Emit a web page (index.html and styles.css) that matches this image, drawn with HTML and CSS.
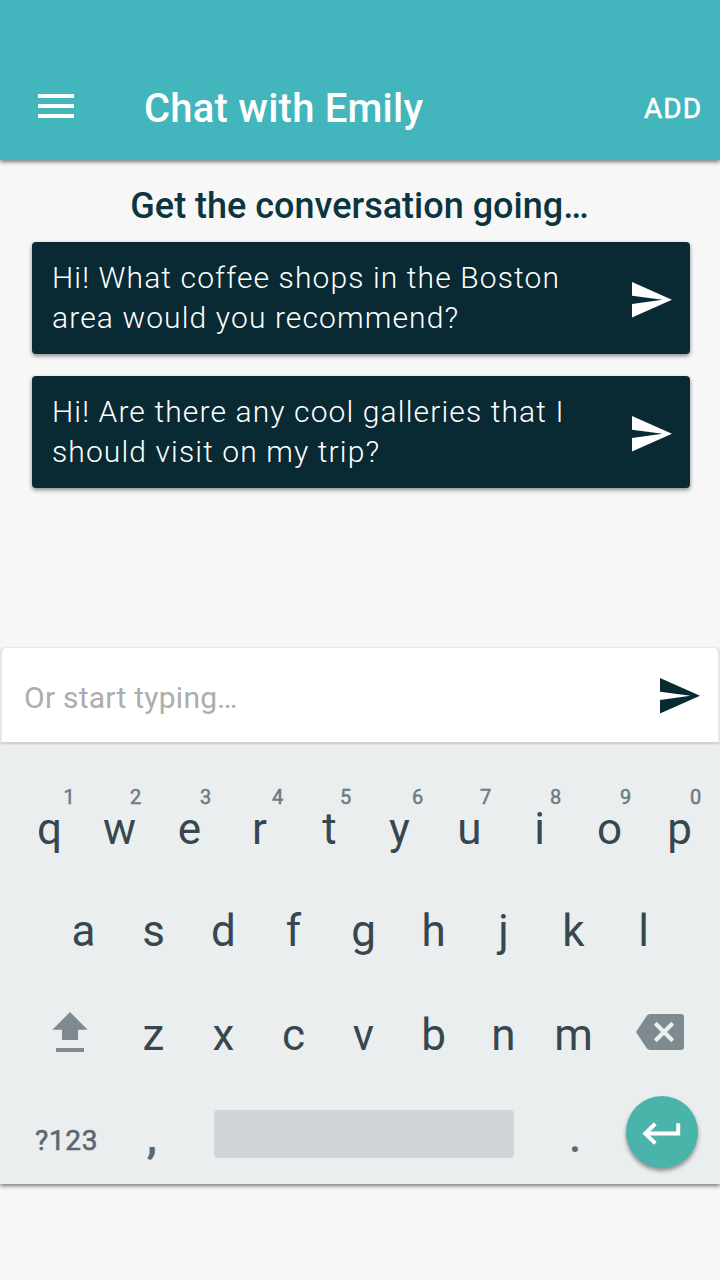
FILE: index.html
```
<!DOCTYPE html>
<html lang="en">
<head>
<meta charset="utf-8">
<title>Chat with Emily</title>
<link rel="stylesheet" href="styles.css">
</head>
<body>
<svg width="0" height="0" class="defs"><symbol id="send" viewBox="0 0 40 36"><path d="M0 0 40 17.8 0 35.6V22L30.5 17.8 0 13.8Z"/></symbol></svg>
<header class="bar">
  <svg class="menu" viewBox="0 0 36 24"><path d="M0 0h36v4H0zM0 10h36v4H0zM0 20h36v4H0z"/></svg>
  <h1 class="title">Chat with Emily</h1>
  <span class="add">ADD</span>
</header>
<main class="chat">
  <h2 class="prompt">Get the conversation going…</h2>
  <div class="card"><p class="msg">Hi! What coffee shops in the Boston<br>area would you recommend?</p><svg class="send"><use href="#send"/></svg></div>
  <div class="card"><p class="msg">Hi! Are there any cool galleries that I<br>should visit on my trip?</p><svg class="send"><use href="#send"/></svg></div>
</main>
<div class="field"><span class="hint">Or start typing…</span><svg class="send dark"><use href="#send"/></svg></div>
<section class="keyboard">
  <div class="row top">
    <span class="key">q<sup class="num first">1</sup></span><span class="key">w<sup class="num">2</sup></span><span class="key">e<sup class="num">3</sup></span><span class="key">r<sup class="num wide">4</sup></span><span class="key">t<sup class="num">5</sup></span><span class="key">y<sup class="num wide">6</sup></span><span class="key">u<sup class="num">7</sup></span><span class="key">i<sup class="num">8</sup></span><span class="key">o<sup class="num">9</sup></span><span class="key">p<sup class="num">0</sup></span>
  </div>
  <div class="row middle">
    <span class="key">a</span><span class="key">s</span><span class="key">d</span><span class="key">f</span><span class="key">g</span><span class="key">h</span><span class="key">j</span><span class="key">k</span><span class="key">l</span>
  </div>
  <div class="row lower">
    <svg class="shift" viewBox="0 0 36 40"><path d="M18 0 35.7 17.8H26V28H10V17.8H.3ZM4 36h28v4H4z"/></svg>
    <span class="key">z</span><span class="key">x</span><span class="key">c</span><span class="key">v</span><span class="key">b</span><span class="key">n</span><span class="key">m</span>
    <svg class="back" viewBox="0 0 48 36"><path class="back-body" d="M45 0H14Q12 0 10.700 1.800L0 18 10.700 34.200Q12 36 14 36H45Q48 36 48 33V3Q48 0 45 0Z"/><path class="back-x" d="m19.300 9.300 17.400 17.400M36.700 9.300 19.300 26.700"/></svg>
  </div>
  <div class="row bottom">
    <span class="mode">?123</span>
    <span class="punct comma">,</span>
    <span class="space"></span>
    <span class="punct dot">.</span>
    <span class="enter"><svg class="enter-icon" viewBox="0 0 72 72"><path d="M29.300 27.800 19.300 37.600l10 9.800M19.300 37.600H52.200V27.200"/></svg></span>
  </div>
</section>
</body>
</html>
```
FILE: styles.css
```
* { box-sizing: border-box; }
body { margin: 0; width: 720px; height: 1280px; overflow: hidden; background: #f7f7f7; font-family: Roboto, sans-serif; display: flex; flex-direction: column; }
h1, h2, p { margin: 0; }
svg { display: block; flex: none; }
.defs { display: none; }
.bar { height: 160px; flex: none; padding: 56px 18px 0 38px; display: flex; align-items: center; background: #43b5bc; color: #fff; box-shadow: 0 2px 4px rgba(0,0,0,.5); }
.menu { width: 36px; height: 24px; margin-top: -4px; fill: #fff; }
.title { flex: 1; margin: 2px 0 0 70px; font-size: 40px; font-weight: 500; line-height: 48px; letter-spacing: .22px; }
.add { margin-top: 1px; font-size: 28px; font-weight: 400; line-height: 32px; letter-spacing: 1px; -webkit-text-stroke: .5px #fff; }
.chat { height: 488px; flex: none; padding: 22px 30px 0 32px; }
.prompt { height: 60px; margin: 0 3px 0 0; line-height: 48px; font-size: 36px; font-weight: 500; text-align: center; color: #0b3640; white-space: nowrap; }
.card { height: 112px; margin-bottom: 22px; padding: 0 18px 0 20px; display: flex; align-items: center; justify-content: space-between; border-radius: 4px; background: #092a33; box-shadow: 0 2px 4px rgba(0,0,0,.45); }
.msg { font-size: 30px; font-weight: 300; line-height: 40px; letter-spacing: 1.12px; color: #fff; white-space: nowrap; }
.send { width: 40px; height: 36px; margin-top: 3px; fill: #fff; }
.field { height: 96px; flex: none; margin-bottom: 1px; padding: 0 18px 0 22px; display: flex; align-items: center; justify-content: space-between; background: #fff; border: 2px solid #e6e6e6; border-top: 0; border-bottom-color: #d5d5d5; border-radius: 5px 5px 0 0; box-shadow: 0 0 2px rgba(0,0,0,.2), 0 1px 0 #fff; }
.hint { margin-top: 5px; font-size: 30px; line-height: 36px; letter-spacing: .25px; color: #adadad; }
.dark { margin-top: 2px; fill: #092a33; }
.keyboard { height: 439px; flex: none; padding-top: 33px; background: #eaeeef; box-shadow: 0 2px 4px rgba(0,0,0,.5); color: #37474f; }
.row { display: flex; align-items: center; height: 102px; }
.top { padding-left: 14.5px; }
.middle { padding-left: 48.5px; }
.lower { height: 106px; padding-left: 52px; }
.bottom { height: 96px; }
.key { position: relative; width: 70px; font-size: 44px; line-height: 36px; text-align: center; }
.num { position: absolute; left: 41px; top: -26px; width: 20px; font-size: 20px; font-weight: 400; line-height: 24px; text-align: center; color: #6a7b83; -webkit-text-stroke: .5px #6a7b83; }
.wide { left: 43px; }
.first { left: 44.5px; }
.shift { width: 36px; height: 40px; margin: -6px 30.5px 0 0; fill: #7f8a90; }
.back { width: 48px; height: 36px; margin: -6px 0 0 27.5px; }
.back-body { fill: #7f8a90; }
.back-x { fill: none; stroke: #eaeeef; stroke-width: 4.2; }
.mode { width: 104px; margin: 9px 0 0 35px; font-size: 28px; font-weight: 400; line-height: 32px; letter-spacing: .7px; color: #5a6970; -webkit-text-stroke: .6px #5a6970; }
.punct { width: 28px; margin-top: 2px; font-size: 44px; font-weight: 700; line-height: 52px; text-align: center; color: #5a6970; }
.comma { margin-left: -1px; }
.space { width: 300px; height: 48px; margin: -4px 0 0 48px; border-radius: 4px; background: #d0d5d8; }
.dot { margin-left: 47px; font-weight: 500; }
.enter { width: 72px; height: 72px; margin: -8px 0 0 37px; border-radius: 50%; background: #4ab4ab; box-shadow: 0 3px 4px rgba(0,0,0,.4); }
.enter-icon { width: 72px; height: 72px; fill: none; stroke: #fff; stroke-width: 4; }
```
